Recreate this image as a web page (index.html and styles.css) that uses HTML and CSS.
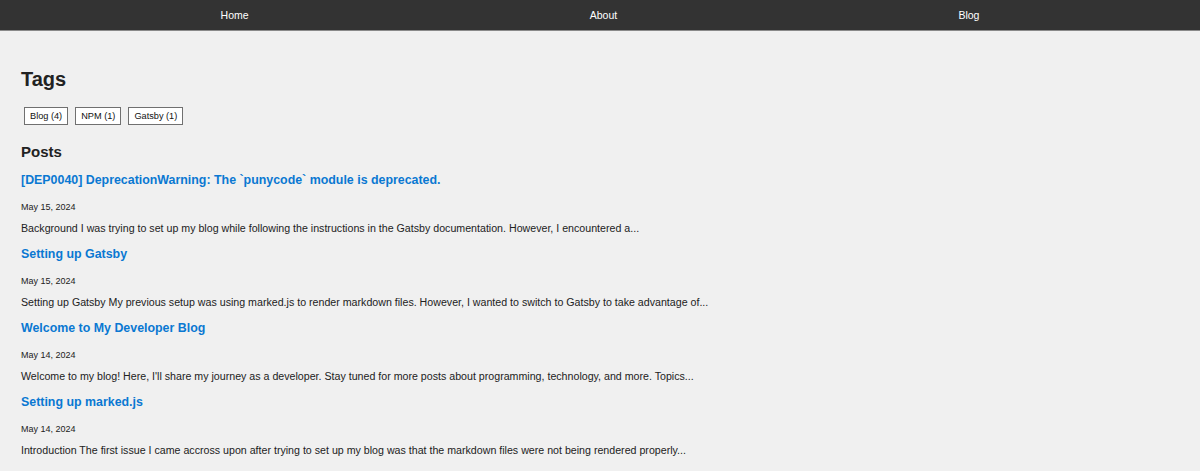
FILE: index.html
```html
<!DOCTYPE html>
<html lang="en">
<head>
<meta charset="utf-8">
<title>Blog</title>
<link rel="stylesheet" href="styles.css">
</head>
<body>
<nav class="nav">
  <a class="nav-link" href="#">Home</a>
  <a class="nav-link" href="#">About</a>
  <a class="nav-link" href="#">Blog</a>
</nav>
<main class="main">
  <h1 class="page-title">Tags</h1>
  <div class="tags">
    <button class="tag">Blog (4)</button>
    <button class="tag">NPM (1)</button>
    <button class="tag">Gatsby (1)</button>
  </div>
  <h2 class="section-title">Posts</h2>
  <ul class="posts">
    <li class="post">
      <a class="post-title" href="#">[DEP0040] DeprecationWarning: The `punycode` module is deprecated.</a>
      <p class="post-date">May 15, 2024</p>
      <p class="post-excerpt">Background I was trying to set up my blog while following the instructions in the Gatsby documentation. However, I encountered a...</p>
    </li>
    <li class="post">
      <a class="post-title" href="#">Setting up Gatsby</a>
      <p class="post-date">May 15, 2024</p>
      <p class="post-excerpt">Setting up Gatsby My previous setup was using marked.js to render markdown files. However, I wanted to switch to Gatsby to take advantage of...</p>
    </li>
    <li class="post">
      <a class="post-title" href="#">Welcome to My Developer Blog</a>
      <p class="post-date">May 14, 2024</p>
      <p class="post-excerpt">Welcome to my blog! Here, I'll share my journey as a developer. Stay tuned for more posts about programming, technology, and more. Topics...</p>
    </li>
    <li class="post">
      <a class="post-title" href="#">Setting up marked.js</a>
      <p class="post-date">May 14, 2024</p>
      <p class="post-excerpt">Introduction The first issue I came accross upon after trying to set up my blog was that the markdown files were not being rendered properly...</p>
    </li>
  </ul>
</main>
</body>
</html>
```
FILE: styles.css
```css
* { box-sizing: border-box; }
html, body { margin: 0; padding: 0; }
body {
  background: #f0f0f0;
  color: #222;
  font-family: "Liberation Sans", Arial, sans-serif;
}
.nav {
  display: flex;
  justify-content: space-around;
  align-items: center;
  height: 31px;
  padding: 0 50px;
  background: #333;
  border-bottom: 1px solid #8a8a8a;
}
.nav-link {
  color: #fff;
  text-decoration: none;
  font-size: 10.5px;
}
.main {
  padding: 36px 21px 0;
}
.page-title {
  margin: 0;
  font-size: 20px;
  line-height: 24px;
  font-weight: bold;
  color: #222;
}
.tags {
  display: flex;
  gap: 7px;
  margin: 16px 0 0 3px;
}
.tag {
  margin: 0;
  padding: 0 5px;
  height: 18px;
  font-family: "Liberation Sans", Arial, sans-serif;
  font-size: 9.2px;
  color: #111;
  background: #fff;
  border: 1px solid #707070;
  border-radius: 0;
}
.section-title {
  margin: 17px 0 0;
  font-size: 15px;
  line-height: 20px;
  font-weight: bold;
}
.posts {
  list-style: none;
  margin: 0;
  padding: 0;
}
.post {
  display: flex;
  flex-direction: column;
  align-items: flex-start;
  height: 74px;
  padding-top: 10px;
}
.post-title {
  color: #0a78d2;
  text-decoration: none;
  font-weight: bold;
  font-size: 12.4px;
  line-height: 16px;
}
.post-date {
  margin: 13px 0 0;
  font-size: 9px;
  line-height: 12px;
}
.post-excerpt {
  margin: 9px 0 0;
  font-size: 10.65px;
  line-height: 12px;
}
```
